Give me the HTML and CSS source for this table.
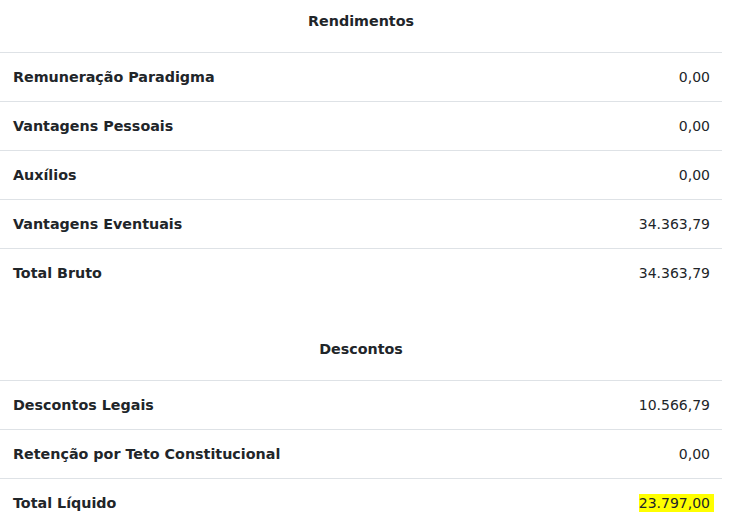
FILE: index.html
```html
<!DOCTYPE html>
<html lang="pt">
<head>
<meta charset="utf-8">
<link rel="stylesheet" href="styles.css">
</head>
<body>
<table class="tbl">
  <thead><tr><th colspan="2" class="head">Rendimentos</th></tr></thead>
  <tbody>
    <tr><td class="lbl">Remuneração Paradigma</td><td class="val">0,00</td></tr>
    <tr><td class="lbl">Vantagens Pessoais</td><td class="val">0,00</td></tr>
    <tr><td class="lbl">Auxílios</td><td class="val">0,00</td></tr>
    <tr><td class="lbl">Vantagens Eventuais</td><td class="val">34.363,79</td></tr>
    <tr><td class="lbl">Total Bruto</td><td class="val">34.363,79</td></tr>
  </tbody>
</table>
<table class="tbl second">
  <thead><tr><th colspan="2" class="head">Descontos</th></tr></thead>
  <tbody>
    <tr><td class="lbl">Descontos Legais</td><td class="val">10.566,79</td></tr>
    <tr><td class="lbl">Retenção por Teto Constitucional</td><td class="val">0,00</td></tr>
    <tr><td class="lbl">Total Líquido</td><td class="val"><mark class="hl">23.797,00</mark></td></tr>
  </tbody>
</table>
</body>
</html>
```
FILE: styles.css
```css
html, body {
  margin: 0;
  padding: 0;
  background: #fff;
}
body {
  font-family: "DejaVu Sans", Verdana, sans-serif;
  font-size: 14.3px;
  color: #212529;
}
.tbl {
  width: 722px;
  border-collapse: collapse;
}
.second {
  margin-top: 31px;
}
.head {
  height: 52px;
  box-sizing: border-box;
  padding: 0 0 10px;
  font-weight: bold;
  text-align: center;
  vertical-align: middle;
}
.tbl td {
  height: 49px;
  box-sizing: border-box;
  border-top: 1px solid #dee2e6;
  padding: 0 12px 0 13px;
  vertical-align: middle;
}
.lbl {
  font-weight: bold;
  text-align: left;
}
.val {
  text-align: right;
  font-size: 14px;
}
.hl {
  background: #ffff00;
  color: #212529;
  padding: 1px 4px 1px 0;
  margin-right: -4px;
}
```
